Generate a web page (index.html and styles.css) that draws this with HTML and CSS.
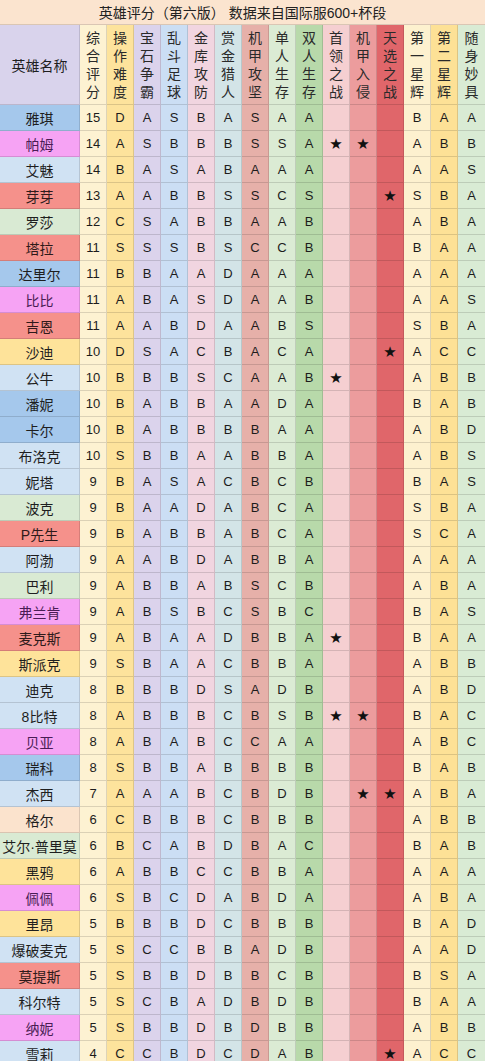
FILE: index.html
```html
<!DOCTYPE html>
<html lang="zh-CN">
<head>
<meta charset="utf-8">
<title>英雄评分（第六版）</title>
<link rel="stylesheet" href="styles.css">
</head>
<body>
<div class="sheet">
  <div class="title">英雄评分（第六版） 数据来自国际服600+杯段</div>
  <div class="row head">
    <div class="name">英雄名称</div>
    <div><span class="vh">综合评分</span></div>
    <div><span class="vh">操作难度</span></div>
    <div><span class="vh">宝石争霸</span></div>
    <div><span class="vh">乱斗足球</span></div>
    <div><span class="vh">金库攻防</span></div>
    <div><span class="vh">赏金猎人</span></div>
    <div><span class="vh">机甲攻坚</span></div>
    <div><span class="vh">单人生存</span></div>
    <div><span class="vh">双人生存</span></div>
    <div><span class="vh">首领之战</span></div>
    <div><span class="vh">机甲入侵</span></div>
    <div><span class="vh">天选之战</span></div>
    <div><span class="vh">第一星辉</span></div>
    <div><span class="vh">第二星辉</span></div>
    <div><span class="vh">随身妙具</span></div>
  </div>
  <div class="row"><div class="name blue">雅琪</div><div>15</div><div>D</div><div>A</div><div>S</div><div>B</div><div>A</div><div>S</div><div>A</div><div>A</div><div></div><div></div><div></div><div>B</div><div>A</div><div>A</div></div>
  <div class="row"><div class="name pink">帕姆</div><div>14</div><div>A</div><div>S</div><div>B</div><div>B</div><div>B</div><div>S</div><div>S</div><div>A</div><div class="star">★</div><div class="star">★</div><div></div><div>A</div><div>B</div><div>B</div></div>
  <div class="row"><div class="name lb">艾魅</div><div>14</div><div>B</div><div>A</div><div>S</div><div>A</div><div>B</div><div>A</div><div>A</div><div>A</div><div></div><div></div><div></div><div>A</div><div>A</div><div>S</div></div>
  <div class="row"><div class="name red">芽芽</div><div>13</div><div>A</div><div>A</div><div>B</div><div>B</div><div>S</div><div>S</div><div>C</div><div>S</div><div></div><div></div><div class="star">★</div><div>S</div><div>B</div><div>A</div></div>
  <div class="row"><div class="name green">罗莎</div><div>12</div><div>C</div><div>S</div><div>A</div><div>B</div><div>B</div><div>A</div><div>A</div><div>B</div><div></div><div></div><div></div><div>A</div><div>B</div><div>A</div></div>
  <div class="row"><div class="name red">塔拉</div><div>11</div><div>S</div><div>S</div><div>S</div><div>B</div><div>S</div><div>C</div><div>C</div><div>B</div><div></div><div></div><div></div><div>B</div><div>A</div><div>A</div></div>
  <div class="row"><div class="name blue">达里尔</div><div>11</div><div>B</div><div>B</div><div>A</div><div>A</div><div>D</div><div>A</div><div>A</div><div>A</div><div></div><div></div><div></div><div>A</div><div>A</div><div>A</div></div>
  <div class="row"><div class="name pink">比比</div><div>11</div><div>A</div><div>B</div><div>A</div><div>S</div><div>D</div><div>A</div><div>A</div><div>B</div><div></div><div></div><div></div><div>A</div><div>A</div><div>S</div></div>
  <div class="row"><div class="name red">吉恩</div><div>11</div><div>A</div><div>A</div><div>B</div><div>D</div><div>A</div><div>A</div><div>B</div><div>S</div><div></div><div></div><div></div><div>S</div><div>B</div><div>A</div></div>
  <div class="row"><div class="name yellow">沙迪</div><div>10</div><div>D</div><div>S</div><div>A</div><div>C</div><div>B</div><div>A</div><div>C</div><div>A</div><div></div><div></div><div class="star">★</div><div>A</div><div>C</div><div>C</div></div>
  <div class="row"><div class="name lb">公牛</div><div>10</div><div>B</div><div>B</div><div>B</div><div>S</div><div>C</div><div>A</div><div>A</div><div>B</div><div class="star">★</div><div></div><div></div><div>A</div><div>B</div><div>B</div></div>
  <div class="row"><div class="name blue">潘妮</div><div>10</div><div>B</div><div>A</div><div>B</div><div>B</div><div>A</div><div>A</div><div>D</div><div>A</div><div></div><div></div><div></div><div>B</div><div>A</div><div>B</div></div>
  <div class="row"><div class="name blue">卡尔</div><div>10</div><div>B</div><div>A</div><div>B</div><div>B</div><div>B</div><div>B</div><div>A</div><div>A</div><div></div><div></div><div></div><div>A</div><div>B</div><div>D</div></div>
  <div class="row"><div class="name lb">布洛克</div><div>10</div><div>S</div><div>B</div><div>B</div><div>A</div><div>A</div><div>B</div><div>B</div><div>A</div><div></div><div></div><div></div><div>A</div><div>B</div><div>S</div></div>
  <div class="row"><div class="name lb">妮塔</div><div>9</div><div>B</div><div>A</div><div>S</div><div>A</div><div>C</div><div>B</div><div>C</div><div>B</div><div></div><div></div><div></div><div>B</div><div>A</div><div>S</div></div>
  <div class="row"><div class="name green">波克</div><div>9</div><div>B</div><div>A</div><div>A</div><div>D</div><div>A</div><div>B</div><div>C</div><div>A</div><div></div><div></div><div></div><div>S</div><div>B</div><div>A</div></div>
  <div class="row"><div class="name red">P先生</div><div>9</div><div>B</div><div>A</div><div>B</div><div>B</div><div>A</div><div>B</div><div>C</div><div>A</div><div></div><div></div><div></div><div>S</div><div>C</div><div>A</div></div>
  <div class="row"><div class="name lb">阿渤</div><div>9</div><div>A</div><div>A</div><div>B</div><div>D</div><div>A</div><div>B</div><div>B</div><div>A</div><div></div><div></div><div></div><div>A</div><div>A</div><div>A</div></div>
  <div class="row"><div class="name green">巴利</div><div>9</div><div>A</div><div>B</div><div>B</div><div>A</div><div>B</div><div>S</div><div>C</div><div>B</div><div></div><div></div><div></div><div>A</div><div>B</div><div>A</div></div>
  <div class="row"><div class="name pink">弗兰肯</div><div>9</div><div>A</div><div>B</div><div>S</div><div>B</div><div>C</div><div>S</div><div>B</div><div>C</div><div></div><div></div><div></div><div>B</div><div>A</div><div>S</div></div>
  <div class="row"><div class="name red">麦克斯</div><div>9</div><div>A</div><div>B</div><div>A</div><div>A</div><div>D</div><div>B</div><div>B</div><div>A</div><div class="star">★</div><div></div><div></div><div>B</div><div>A</div><div>A</div></div>
  <div class="row"><div class="name yellow">斯派克</div><div>9</div><div>S</div><div>B</div><div>A</div><div>A</div><div>C</div><div>B</div><div>B</div><div>A</div><div></div><div></div><div></div><div>A</div><div>B</div><div>B</div></div>
  <div class="row"><div class="name lb">迪克</div><div>8</div><div>B</div><div>B</div><div>B</div><div>D</div><div>S</div><div>A</div><div>D</div><div>B</div><div></div><div></div><div></div><div>A</div><div>B</div><div>D</div></div>
  <div class="row"><div class="name lb">8比特</div><div>8</div><div>A</div><div>B</div><div>B</div><div>B</div><div>C</div><div>B</div><div>S</div><div>B</div><div class="star">★</div><div class="star">★</div><div></div><div>B</div><div>A</div><div>C</div></div>
  <div class="row"><div class="name pink">贝亚</div><div>8</div><div>A</div><div>B</div><div>A</div><div>B</div><div>C</div><div>C</div><div>A</div><div>A</div><div></div><div></div><div></div><div>A</div><div>B</div><div>C</div></div>
  <div class="row"><div class="name blue">瑞科</div><div>8</div><div>S</div><div>B</div><div>B</div><div>A</div><div>B</div><div>B</div><div>B</div><div>B</div><div></div><div></div><div></div><div>B</div><div>A</div><div>B</div></div>
  <div class="row"><div class="name lb">杰西</div><div>7</div><div>A</div><div>A</div><div>A</div><div>B</div><div>C</div><div>B</div><div>D</div><div>B</div><div></div><div class="star">★</div><div class="star">★</div><div>A</div><div>B</div><div>A</div></div>
  <div class="row"><div class="name peach">格尔</div><div>6</div><div>C</div><div>B</div><div>B</div><div>B</div><div>C</div><div>B</div><div>B</div><div>B</div><div></div><div></div><div></div><div>A</div><div>B</div><div>B</div></div>
  <div class="row"><div class="name green">艾尔·普里莫</div><div>6</div><div>B</div><div>C</div><div>A</div><div>B</div><div>D</div><div>B</div><div>A</div><div>C</div><div></div><div></div><div></div><div>B</div><div>A</div><div>B</div></div>
  <div class="row"><div class="name yellow">黑鸦</div><div>6</div><div>A</div><div>B</div><div>B</div><div>C</div><div>C</div><div>B</div><div>B</div><div>A</div><div></div><div></div><div></div><div>A</div><div>A</div><div>A</div></div>
  <div class="row"><div class="name pink">佩佩</div><div>6</div><div>S</div><div>B</div><div>C</div><div>D</div><div>A</div><div>B</div><div>D</div><div>A</div><div></div><div></div><div></div><div>A</div><div>B</div><div>A</div></div>
  <div class="row"><div class="name yellow">里昂</div><div>5</div><div>B</div><div>B</div><div>B</div><div>D</div><div>C</div><div>B</div><div>B</div><div>B</div><div></div><div></div><div></div><div>B</div><div>A</div><div>D</div></div>
  <div class="row"><div class="name lb">爆破麦克</div><div>5</div><div>S</div><div>C</div><div>C</div><div>B</div><div>B</div><div>A</div><div>D</div><div>B</div><div></div><div></div><div></div><div>A</div><div>A</div><div>D</div></div>
  <div class="row"><div class="name red">莫提斯</div><div>5</div><div>S</div><div>B</div><div>B</div><div>D</div><div>B</div><div>B</div><div>C</div><div>B</div><div></div><div></div><div></div><div>B</div><div>S</div><div>A</div></div>
  <div class="row"><div class="name lb">科尔特</div><div>5</div><div>S</div><div>C</div><div>B</div><div>A</div><div>D</div><div>B</div><div>D</div><div>B</div><div></div><div></div><div></div><div>B</div><div>A</div><div>A</div></div>
  <div class="row"><div class="name pink">纳妮</div><div>5</div><div>S</div><div>B</div><div>B</div><div>D</div><div>B</div><div>D</div><div>B</div><div>B</div><div></div><div></div><div></div><div>A</div><div>B</div><div>B</div></div>
  <div class="row"><div class="name lb">雪莉</div><div>4</div><div>C</div><div>C</div><div>B</div><div>D</div><div>C</div><div>D</div><div>A</div><div>B</div><div></div><div></div><div class="star">★</div><div>A</div><div>C</div><div>C</div></div>
</div>
</body>
</html>
```
FILE: styles.css
```css
html, body {
  margin: 0;
  padding: 0;
  background: #ffffff;
}
body {
  font-family: "Liberation Sans", "Noto Sans CJK SC", sans-serif;
  color: #1c1c1c;
  overflow: hidden;
}
.sheet {
  width: 485px;
}
.title {
  height: 25px;
  box-sizing: border-box;
  background: #fbe4cf;
  border-bottom: 1px solid rgba(0, 0, 0, 0.13);
  display: flex;
  align-items: center;
  justify-content: center;
  font-size: 14px;
  color: #222;
}
.row {
  display: grid;
  grid-template-columns: 80px repeat(15, 27px);
  height: 26px;
}
.row > div {
  box-sizing: border-box;
  border-right: 1px solid rgba(0, 0, 0, 0.12);
  border-bottom: 1px solid rgba(0, 0, 0, 0.13);
  display: flex;
  align-items: center;
  justify-content: center;
  font-size: 13px;
}
.row > div:last-child {
  border-right: none;
}
.row > :nth-child(2) { background: #fdf2d2; }
.row > :nth-child(3) { background: #fde39c; }
.row > :nth-child(4) { background: #dbd3ec; }
.row > :nth-child(5) { background: #cbdef4; }
.row > :nth-child(6) { background: #f1d5e0; }
.row > :nth-child(7) { background: #d3e4e7; }
.row > :nth-child(8) { background: #e6b0a9; }
.row > :nth-child(9) { background: #dbebd4; }
.row > :nth-child(10) { background: #b8d9aa; }
.row > :nth-child(11) { background: #f5cfd1; }
.row > :nth-child(12) { background: #ec9c9d; }
.row > :nth-child(13) { background: #e0666a; }
.row > :nth-child(14) { background: #fdf1cf; }
.row > :nth-child(15) { background: #fde196; }
.row > :nth-child(16) { background: #d9ebd4; }

.head {
  height: 80px;
}
.head > div {
  font-size: 14px;
  color: #2a2a2a;
}
.vh {
  display: block;
  width: 1em;
  line-height: 18px;
  text-align: center;
}
.row > .name {
  font-size: 14px;
  background: #d3e3f3;
  color: #1e1e1e;
}
.head > .name {
  background: #d9d3ec;
}
.row > .name.blue { background: #a5c8ec; }
.row > .name.lb { background: #d0e2f3; }
.row > .name.pink { background: #f6a3f4; color: #4a1d55; }
.row > .name.red { background: #f5918b; color: #2e1a1a; }
.row > .name.green { background: #d9ead3; }
.row > .name.yellow { background: #fee39a; }
.row > .name.peach { background: #fbe3cd; }
.row > .star {
  font-family: "DejaVu Sans", sans-serif;
  font-size: 15px;
  color: #111;
}
```
